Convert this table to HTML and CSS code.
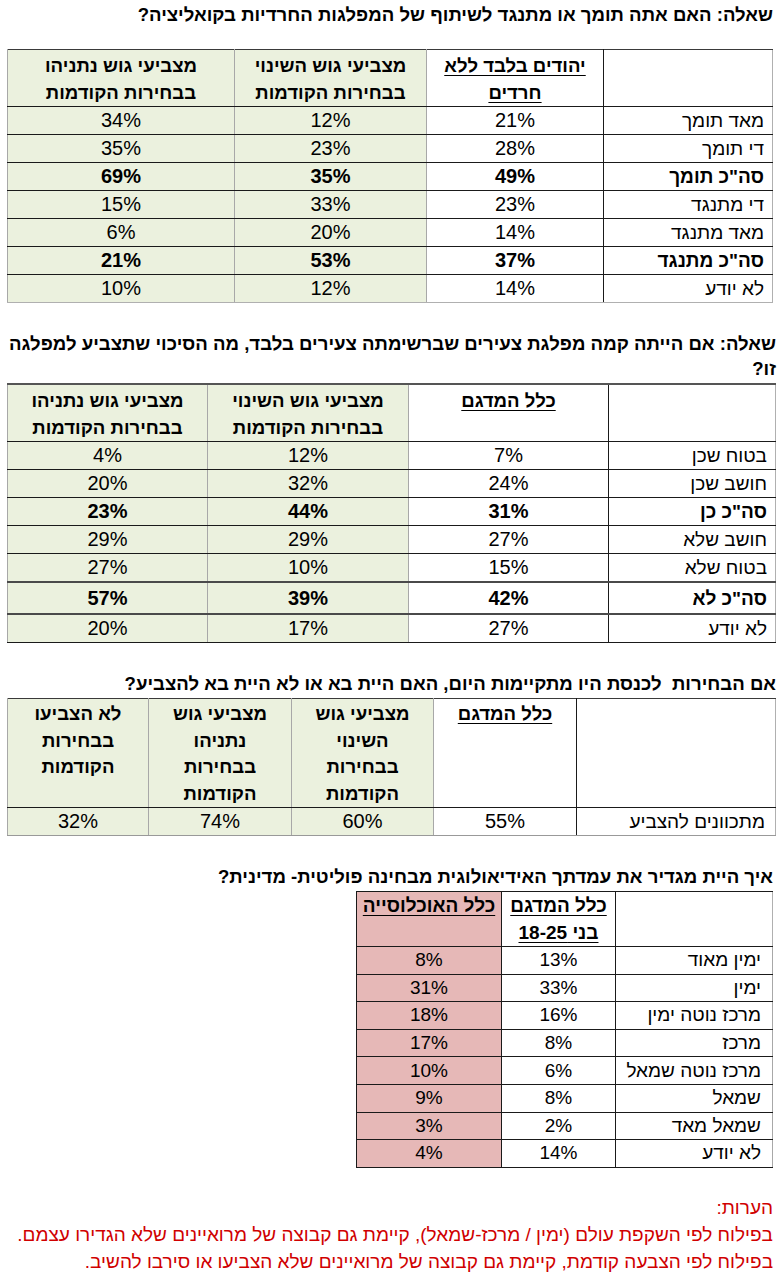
FILE: index.html
```html
<!DOCTYPE html>
<html lang="he" dir="rtl">
<head>
<meta charset="utf-8">
<title>סקר</title>
<link rel="stylesheet" href="styles.css">
</head>
<body>
<main class="page">

  <section class="block block-1">
    <h2 class="q">שאלה: האם אתה תומך או מתנגד לשיתוף של המפלגות החרדיות בקואליציה?</h2>
    <table class="grid t1">
      <colgroup>
        <col class="w169"><col class="w177"><col class="w192"><col class="w227">
      </colgroup>
      <thead>
        <tr class="head2">
          <th class="lab"></th>
          <th class="plain"><u>יהודים בלבד ללא<br>חרדים</u></th>
          <th class="green">מצביעי גוש השינוי<br>בבחירות הקודמות</th>
          <th class="green">מצביעי גוש נתניהו<br>בבחירות הקודמות</th>
        </tr>
      </thead>
      <tbody>
        <tr><td class="lab">מאד תומך</td><td>21%</td><td class="green">12%</td><td class="green">34%</td></tr>
        <tr><td class="lab">די תומך</td><td>28%</td><td class="green">23%</td><td class="green">35%</td></tr>
        <tr class="bold"><td class="lab">סה"כ תומך</td><td>49%</td><td class="green">35%</td><td class="green">69%</td></tr>
        <tr><td class="lab">די מתנגד</td><td>23%</td><td class="green">33%</td><td class="green">15%</td></tr>
        <tr><td class="lab">מאד מתנגד</td><td>14%</td><td class="green">20%</td><td class="green">6%</td></tr>
        <tr class="bold"><td class="lab">סה"כ מתנגד</td><td>37%</td><td class="green">53%</td><td class="green">21%</td></tr>
        <tr class="last"><td class="lab">לא יודע</td><td>14%</td><td class="green">12%</td><td class="green">10%</td></tr>
      </tbody>
    </table>
  </section>

  <section class="block block-2">
    <h2 class="q q-wide">שאלה: אם הייתה קמה מפלגת צעירים שברשימתה צעירים בלבד, מה הסיכוי שתצביע למפלגה זו?</h2>
    <table class="grid t2">
      <colgroup>
        <col class="w167"><col class="w200"><col class="w201"><col class="w200">
      </colgroup>
      <thead>
        <tr class="head2">
          <th class="lab"></th>
          <th class="plain"><u>כלל המדגם</u><br>&nbsp;</th>
          <th class="green">מצביעי גוש השינוי<br>בבחירות הקודמות</th>
          <th class="green">מצביעי גוש נתניהו<br>בבחירות הקודמות</th>
        </tr>
      </thead>
      <tbody>
        <tr><td class="lab">בטוח שכן</td><td>7%</td><td class="green">12%</td><td class="green">4%</td></tr>
        <tr><td class="lab">חושב שכן</td><td>24%</td><td class="green">32%</td><td class="green">20%</td></tr>
        <tr class="bold"><td class="lab">סה"כ כן</td><td>31%</td><td class="green">44%</td><td class="green">23%</td></tr>
        <tr><td class="lab">חושב שלא</td><td>27%</td><td class="green">29%</td><td class="green">29%</td></tr>
        <tr><td class="lab">בטוח שלא</td><td>15%</td><td class="green">10%</td><td class="green">27%</td></tr>
        <tr class="bold tall"><td class="lab">סה"כ לא</td><td>42%</td><td class="green">39%</td><td class="green">57%</td></tr>
        <tr class="after-tall last"><td class="lab">לא יודע</td><td>27%</td><td class="green">17%</td><td class="green">20%</td></tr>
      </tbody>
    </table>
  </section>

  <section class="block block-3">
    <h2 class="q q-wide">אם הבחירות&nbsp; לכנסת היו מתקיימות היום, האם היית בא או לא היית בא להצביע?</h2>
    <table class="grid t3">
      <colgroup>
        <col class="w199"><col class="w143"><col class="w142"><col class="w143"><col class="w141">
      </colgroup>
      <thead>
        <tr class="head4">
          <th class="lab"></th>
          <th class="plain"><u>כלל המדגם</u></th>
          <th class="green">מצביעי גוש<br>השינוי<br>בבחירות<br>הקודמות</th>
          <th class="green">מצביעי גוש<br>נתניהו<br>בבחירות<br>הקודמות</th>
          <th class="green">לא הצביעו<br>בבחירות<br>הקודמות</th>
        </tr>
      </thead>
      <tbody>
        <tr class="r27 last"><td class="lab">מתכוונים להצביע</td><td>55%</td><td class="green">60%</td><td class="green">74%</td><td class="green">32%</td></tr>
      </tbody>
    </table>
  </section>

  <section class="block block-4">
    <h2 class="q q-arial">איך היית מגדיר את עמדתך האידיאולוגית מבחינה פוליטית- מדינית?</h2>
    <table class="grid t4">
      <colgroup>
        <col class="w157"><col class="w114"><col class="w145">
      </colgroup>
      <thead>
        <tr class="head2">
          <th class="lab"></th>
          <th class="plain"><u>כלל המדגם<br>בני 18-25</u></th>
          <th class="pink"><u>כלל האוכלוסייה</u></th>
        </tr>
      </thead>
      <tbody>
        <tr><td class="lab">ימין מאוד</td><td>13%</td><td class="pink">8%</td></tr>
        <tr><td class="lab">ימין</td><td>33%</td><td class="pink">31%</td></tr>
        <tr><td class="lab">מרכז נוטה ימין</td><td>16%</td><td class="pink">18%</td></tr>
        <tr><td class="lab">מרכז</td><td>8%</td><td class="pink">17%</td></tr>
        <tr><td class="lab">מרכז נוטה שמאל</td><td>6%</td><td class="pink">10%</td></tr>
        <tr><td class="lab">שמאל</td><td>8%</td><td class="pink">9%</td></tr>
        <tr><td class="lab">שמאל מאד</td><td>2%</td><td class="pink">3%</td></tr>
        <tr><td class="lab">לא יודע</td><td>14%</td><td class="pink">4%</td></tr>
      </tbody>
    </table>
  </section>

  <section class="notes">
    <p>הערות:</p>
    <p>בפילוח לפי השקפת עולם (ימין / מרכז-שמאל), קיימת גם קבוצה של מרואיינים שלא הגדירו עצמם.</p>
    <p>בפילוח לפי הצבעה קודמת, קיימת גם קבוצה של מרואיינים שלא הצביעו או סירבו להשיב.</p>
  </section>

</main>
</body>
</html>
```

FILE: styles.css
```css
html, body {
  margin: 0;
  padding: 0;
  background: #ffffff;
}

body {
  font-family: "Liberation Sans Narrow", "Liberation Sans", Arial, sans-serif;
  color: #000;
  font-size: 19px;
}

.page {
  width: 781px;
  padding: 0 5px 0 8px;
  box-sizing: border-box;
}

.q {
  margin: 0;
  font-size: 18.6px;
  font-weight: bold;
  line-height: 26px;
  text-align: right;
  margin-right: 3px;
}

.q-wide {
  margin-right: 0;
  margin-left: -4px;
}

.q-arial {
  font-family: "Liberation Sans", Arial, sans-serif;
  font-size: 18.6px;
  margin-right: 3px;
}

.block-1 { padding-top: 2px; }
.block-1 .q { margin-bottom: 21px; }
.block-2 { padding-top: 28px; }
.block-2 .q { line-height: 25px; margin-bottom: 2px; }
.block-3 { padding-top: 28px; }
.block-3 .q { margin-bottom: 1px; }
.block-4 { padding-top: 28px; }
.block-4 .q { margin-bottom: 1px; }

.grid {
  border-collapse: collapse;
  table-layout: fixed;
  text-align: center;
}

.t1 { width: 765px; margin-right: 3px; }
.t2 { width: 768px; }
.t3 { width: 768px; }
.t4 {
  width: 416px;
  margin-right: 3px;
  font-family: "Liberation Sans", Arial, sans-serif;
  font-size: 19px;
}

.w141 { width: 141px; }
.w142 { width: 142px; }
.w143 { width: 143px; }
.w114 { width: 114px; }
.w145 { width: 145px; }
.w157 { width: 157px; }
.w167 { width: 167px; }
.w169 { width: 169px; }
.w177 { width: 177px; }
.w192 { width: 192px; }
.w199 { width: 199px; }
.w200 { width: 200px; }
.w201 { width: 201px; }
.w227 { width: 227px; }

.grid th,
.grid td {
  padding: 0;
  border-top: 1px solid #1a1a1a;
  border-bottom: 1px solid #1a1a1a;
  border-left: 1px solid #a8a8a8;
  border-right: 1px solid #a8a8a8;
  vertical-align: middle;
}

.grid th {
  font-weight: bold;
  font-size: 18.6px;
  line-height: 26.5px;
  vertical-align: top;
  padding-top: 3px;
  border-top: 1px solid #3a3a3a;
}

.grid td {
  height: 27px;
  font-weight: normal;
  font-size: 20px;
  line-height: 27px;
}

.grid td.lab {
  font-size: 19px;
}

.grid .lab {
  text-align: right;
  padding-right: 8px;
  border-right-color: #b0b0b0;
  border-left: 1px solid #1a1a1a;
}

.grid u {
  text-underline-offset: 3px;
  text-decoration-thickness: 1px;
}

.head2 th { height: 50px; }
.head4 th { height: 106px; }

.green { background: #ebf1de; }
.pink { background: #e6b8b7; }

.bold td { font-weight: bold; }

.t1 .last td { border-bottom-color: #b0b0b0; }

.t2 th { border-top: 2px solid #555; }
.t2 .head2 th { height: 47px; }

.t2 .tall td {
  height: 30px;
  border-top: 2px solid #4a4a4a;
  border-bottom: 2px solid #4a4a4a;
}

.t3 th { padding-top: 2px; }
.t3 .head4 th { height: 106px; }
.t3 .r27 td { height: 26px; }
.t3 .last td { border-bottom-color: #999; }
.t3 .lab { padding-right: 10px; }

.t4 th, .t4 td {
  border-left-color: #1a1a1a;
  border-right-color: #1a1a1a;
}
.t4 th {
  font-size: 19px;
  border-top: 1px solid #1a1a1a;
  padding-top: 1px;
}
.t4 .head2 th { height: 52px; }
.t4 td { height: 26.6px; font-size: 19px; line-height: 26px; }
.t4 td.lab { padding-right: 11px; border-right-color: #a8a8a8; }

.notes {
  padding-top: 26px;
  color: #d00000;
  font-size: 19px;
  line-height: 27px;
  text-align: right;
  margin-right: 3px;
}

.notes p { margin: 0; }
```
